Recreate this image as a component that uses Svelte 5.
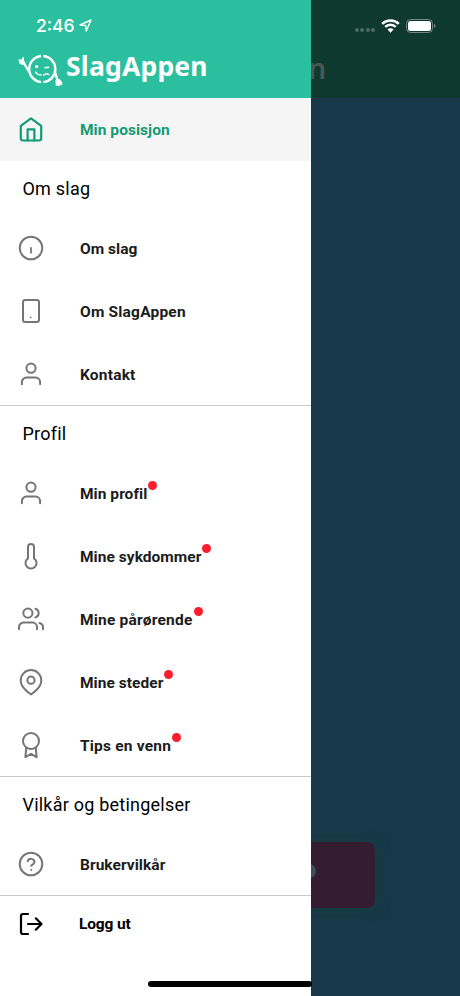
<script lang="ts">
  interface Item {
    label: string;
    icon: string;
    dot?: boolean;
    wide?: boolean;
  }
  interface Section {
    title: string;
    items: Item[];
  }

  const sections: Section[] = [
    {
      title: 'Om slag',
      items: [
        { label: 'Om slag', icon: 'info' },
        { label: 'Om SlagAppen', icon: 'phone', wide: true },
        { label: 'Kontakt', icon: 'user', wide: true },
      ],
    },
    {
      title: 'Profil',
      items: [
        { label: 'Min profil', icon: 'user', dot: true },
        { label: 'Mine sykdommer', icon: 'thermometer', dot: true },
        { label: 'Mine pårørende', icon: 'users', dot: true, wide: true },
        { label: 'Mine steder', icon: 'pin', dot: true },
        { label: 'Tips en venn', icon: 'award', dot: true, wide: true },
      ],
    },
    {
      title: 'Vilkår og betingelser',
      items: [{ label: 'Brukervilkår', icon: 'help' }],
    },
  ];

  let active = $state('Min posisjon');
</script>

{#snippet icon(name: string)}
  <svg class="icon" viewBox="0 0 28 28" aria-hidden="true">
    {#if name === 'home'}
      <path d="M3.8 10.8 14 3.4l10.2 7.4v12.5a2.2 2.2 0 0 1-2.2 2.2H6a2.2 2.2 0 0 1-2.2-2.2z" />
      <path d="M10.6 25.5V14.4h6.8v11.1" />
    {:else if name === 'info'}
      <circle cx="14" cy="14" r="11.3" />
      <path class="thin" d="M14 13.9v4.8" />
    {:else if name === 'phone'}
      <rect x="6" y="3" width="16" height="22" rx="2.2" />
      <path class="thin" d="M13.7 20.3h.01" />
    {:else if name === 'user'}
      <circle cx="14" cy="8.2" r="4.6" />
      <path d="M4.9 24.3v-2.2a4.5 4.5 0 0 1 4.5-4.5h9.2a4.5 4.5 0 0 1 4.5 4.5v2.2" />
    {:else if name === 'thermometer'}
      <path d="M17 16.4V5a3 3 0 0 0-6 0v11.4a5.5 5.5 0 1 0 6 0z" />
    {:else if name === 'users'}
      <circle cx="10.9" cy="8.1" r="4.6" />
      <path d="M2 24.3v-2.2a4.5 4.5 0 0 1 4.5-4.5h9a4.5 4.5 0 0 1 4.5 4.5v2.2M18.4 3.7a4.6 4.6 0 0 1 0 8.8M26 24.3v-2.2a4.5 4.5 0 0 0-3.5-4.2" />
    {:else if name === 'pin'}
      <path d="M24.3 12.4c0 7.8-10.3 14-10.3 14S3.7 20.2 3.7 12.4a10.3 10.3 0 0 1 20.6 0z" />
      <circle cx="14" cy="12.2" r="3.6" />
    {:else if name === 'award'}
      <circle cx="14" cy="10" r="8" />
      <path d="M9.2 17 8.4 26.2l5.6-3.4 5.6 3.4-.8-9.2" />
    {:else if name === 'help'}
      <circle cx="14" cy="14" r="11.3" />
      <path d="M10.7 11.2a3.5 3.5 0 0 1 6.8.9c0 2.3-3.4 3.1-3.4 3.7M14.3 20h.01" />
    {:else if name === 'logout'}
      <path d="M11 4H6a2 2 0 0 0-2 2v16a2 2 0 0 0 2 2h5M11 14h13M18.8 8.3 24.5 14l-5.7 5.7" />
    {/if}
  </svg>
{/snippet}

<div class="screen">
  <main class="page">
    <div class="page-head"><span>n</span></div>
    <div class="page-action"><i></i></div>
  </main>

  <nav class="drawer">
    <header class="brand">
      <svg class="logo" viewBox="0 0 46 36" aria-hidden="true">
        <path d="M23.1 5a13.1 13.1 0 0 0 0 26.1M25.4 5a13.1 13.1 0 0 1 0 26.1" />
        <path class="limb" d="M11.2 21 5.5 11.5M36.8 20.5l2.8 9" />
        <path class="hand" d="m.5 8.2 3.2.2.9-2.4 1.5.6-.2 2.6 1.6 2.9-3.4 2.2-3-2.2zM37.4 29.2l3.8-1.4 3.2 3.6-.4 2.8-2.1-.4-.7 1.8-1.8-1-1.6.6z" />
        <circle class="eye" cx="18.7" cy="15.6" r="1.6" />
        <path class="face" d="m27 16.7 3.6-.5M17.6 21q1.9 3.2 5.6 2.8M25.6 24.2q2.6-2.4 5.2-.6" />
      </svg>
      <h1>SlagAppen</h1>
    </header>

    <button
      type="button"
      class="row"
      class:active={active === 'Min posisjon'}
      onclick={() => (active = 'Min posisjon')}
    >
      {@render icon('home')}
      <span class="label">Min posisjon</span>
    </button>

    {#each sections as section}
      <section>
        <h2>{section.title}</h2>
        {#each section.items as item}
          <button
            type="button"
            class="row"
            class:active={active === item.label}
            onclick={() => (active = item.label)}
          >
            {@render icon(item.icon)}
            <span class="label" class:wide={item.wide}>{item.label}</span>
            {#if item.dot}<i class="dot"></i>{/if}
          </button>
        {/each}
      </section>
    {/each}

    <button type="button" class="row logout">
      {@render icon('logout')}
      <span class="label">Logg ut</span>
    </button>
  </nav>

  <div class="status">
    <span class="time">2:46</span>
    <svg class="location" viewBox="0 0 13 13" aria-hidden="true">
      <path d="M1 6 12 1 7.2 12 6.6 6.5z" />
    </svg>
    <div class="signal"><i></i><i></i><i></i><i></i></div>
    <svg class="wifi" viewBox="0 0 18 13" aria-hidden="true">
      <path d="M1.1 4.5a11.3 11.3 0 0 1 15.8 0M4 7.4a7.1 7.1 0 0 1 10 0" />
      <path class="fill" d="M6.1 9.9a4.1 4.1 0 0 1 5.8 0L9 12.8z" />
    </svg>
    <svg class="battery" viewBox="0 0 30 14" aria-hidden="true">
      <rect class="case" x=".5" y=".5" width="26" height="13" rx="4" />
      <rect x="2" y="2" width="23" height="10" rx="2.5" />
      <path class="cap" d="M28 4.7q1.5.7 1.5 2.3T28 9.3z" />
    </svg>
  </div>
  <div class="home-indicator"></div>
</div>

<style>
  :global(body) {
    margin: 0;
  }

  .screen {
    position: relative;
    width: 460px;
    height: 996px;
    overflow: hidden;
    background: #173848;
    font-family: Roboto, 'Liberation Sans', sans-serif;
  }

  .page {
    display: flex;
    flex-direction: column;
    justify-content: space-between;
    height: 908px;
  }
  .page-head {
    display: flex;
    justify-content: flex-end;
    box-sizing: border-box;
    height: 98px;
    padding: 49px 134px 0 0;
    background: #0e392e;
    color: #4a5653;
    font: 600 28px/38px 'Noto Sans', sans-serif;
  }
  .page-action {
    display: flex;
    align-items: center;
    justify-content: center;
    width: 290px;
    height: 66px;
    margin-left: 85px;
    border-radius: 8px;
    background: #351d31;
    box-shadow: 0 1px 14px rgba(22, 62, 62, 0.9);
  }
  .page-action i {
    width: 14px;
    height: 14px;
    margin: 0 0 8px 158px;
    border-radius: 50%;
    background: #414d58;
  }

  .drawer {
    position: absolute;
    inset: 0 auto 0 0;
    width: 311px;
    background: #fff;
  }
  .brand {
    display: flex;
    align-items: flex-start;
    gap: 2px;
    box-sizing: border-box;
    height: 98px;
    padding: 51px 0 0 18px;
    background: #2abf9e;
    color: #fff;
  }
  .logo {
    width: 46px;
    height: 36px;
    fill: none;
    stroke: #fff;
    stroke-width: 2.4;
  }
  .logo .hand,
  .logo .eye {
    fill: #fff;
    stroke: none;
  }
  .logo .face {
    stroke-width: 1.4;
    stroke-linecap: round;
  }
  h1 {
    margin: -4px 0 0;
    font: 700 26.5px/38px 'Noto Sans', sans-serif;
    letter-spacing: 0.2px;
  }

  section {
    border-bottom: 1px solid #c9c9c9;
  }
  h2 {
    margin: 0;
    padding-left: 22.5px;
    color: #000;
    font-size: 18px;
    font-weight: 400;
    line-height: 56px;
    letter-spacing: 0.22px;
  }

  .row {
    display: flex;
    align-items: center;
    box-sizing: border-box;
    width: 100%;
    height: 63px;
    padding: 0 0 0 17px;
    border: 0;
    background: none;
    color: #1c1c1c;
    font: 700 15.5px/20px Roboto, 'Liberation Sans', sans-serif;
    letter-spacing: 0.04px;
    text-align: left;
  }
  section .row:last-child {
    height: 62px;
    padding-top: 1px;
  }
  .label {
    margin-left: 35px;
    white-space: nowrap;
  }
  .wide {
    letter-spacing: 0.2px;
  }
  .active {
    background: #f5f5f5;
    color: #129b75;
  }
  .logout {
    height: 56px;
    color: #000;
    letter-spacing: -0.15px;
  }
  .logout .label {
    margin-left: 34px;
  }
  .dot {
    width: 9px;
    height: 9px;
    margin: -17px 0 0 1px;
    border-radius: 50%;
    background: #fa1e2d;
  }

  .icon {
    flex: none;
    width: 28px;
    height: 28px;
    margin: 0 0 1px;
    fill: none;
    stroke: #757575;
    stroke-width: 2;
    stroke-linecap: round;
    stroke-linejoin: round;
  }
  .icon .thin {
    stroke-width: 1.8;
  }
  .active .icon {
    stroke: #129b75;
    stroke-width: 2.2;
  }
  .logout .icon {
    margin: 0;
    stroke: #000;
    stroke-width: 2.2;
  }

  .status {
    position: absolute;
    inset: 0 0 auto;
    display: flex;
    align-items: center;
    box-sizing: border-box;
    height: 51px;
    padding: 0 24px 0 36px;
    color: #fff;
  }
  .time {
    font: 500 17.5px/22px Inter, sans-serif;
  }
  .location {
    width: 13px;
    height: 13px;
    margin-left: 4px;
    fill: none;
    stroke: #fff;
    stroke-width: 1.4;
    stroke-linejoin: round;
  }
  .signal {
    display: flex;
    gap: 1.5px;
    margin: 9px 6px 0 auto;
  }
  .signal i {
    width: 4px;
    height: 4px;
    border-radius: 50%;
    background: #4a6c63;
  }
  .wifi {
    width: 19px;
    height: 14px;
    margin-right: 6px;
    fill: none;
    stroke: #fff;
    stroke-width: 2.3;
  }
  .wifi .fill {
    fill: #fff;
    stroke: none;
  }
  .battery {
    width: 30px;
    height: 14px;
    fill: #fff;
  }
  .battery .case {
    fill: none;
    stroke: #71877f;
  }
  .battery .cap {
    fill: #71877f;
  }

  .home-indicator {
    position: absolute;
    bottom: 9px;
    left: 148px;
    width: 164px;
    height: 6px;
    border-radius: 3px;
    background: #000;
  }
</style>
